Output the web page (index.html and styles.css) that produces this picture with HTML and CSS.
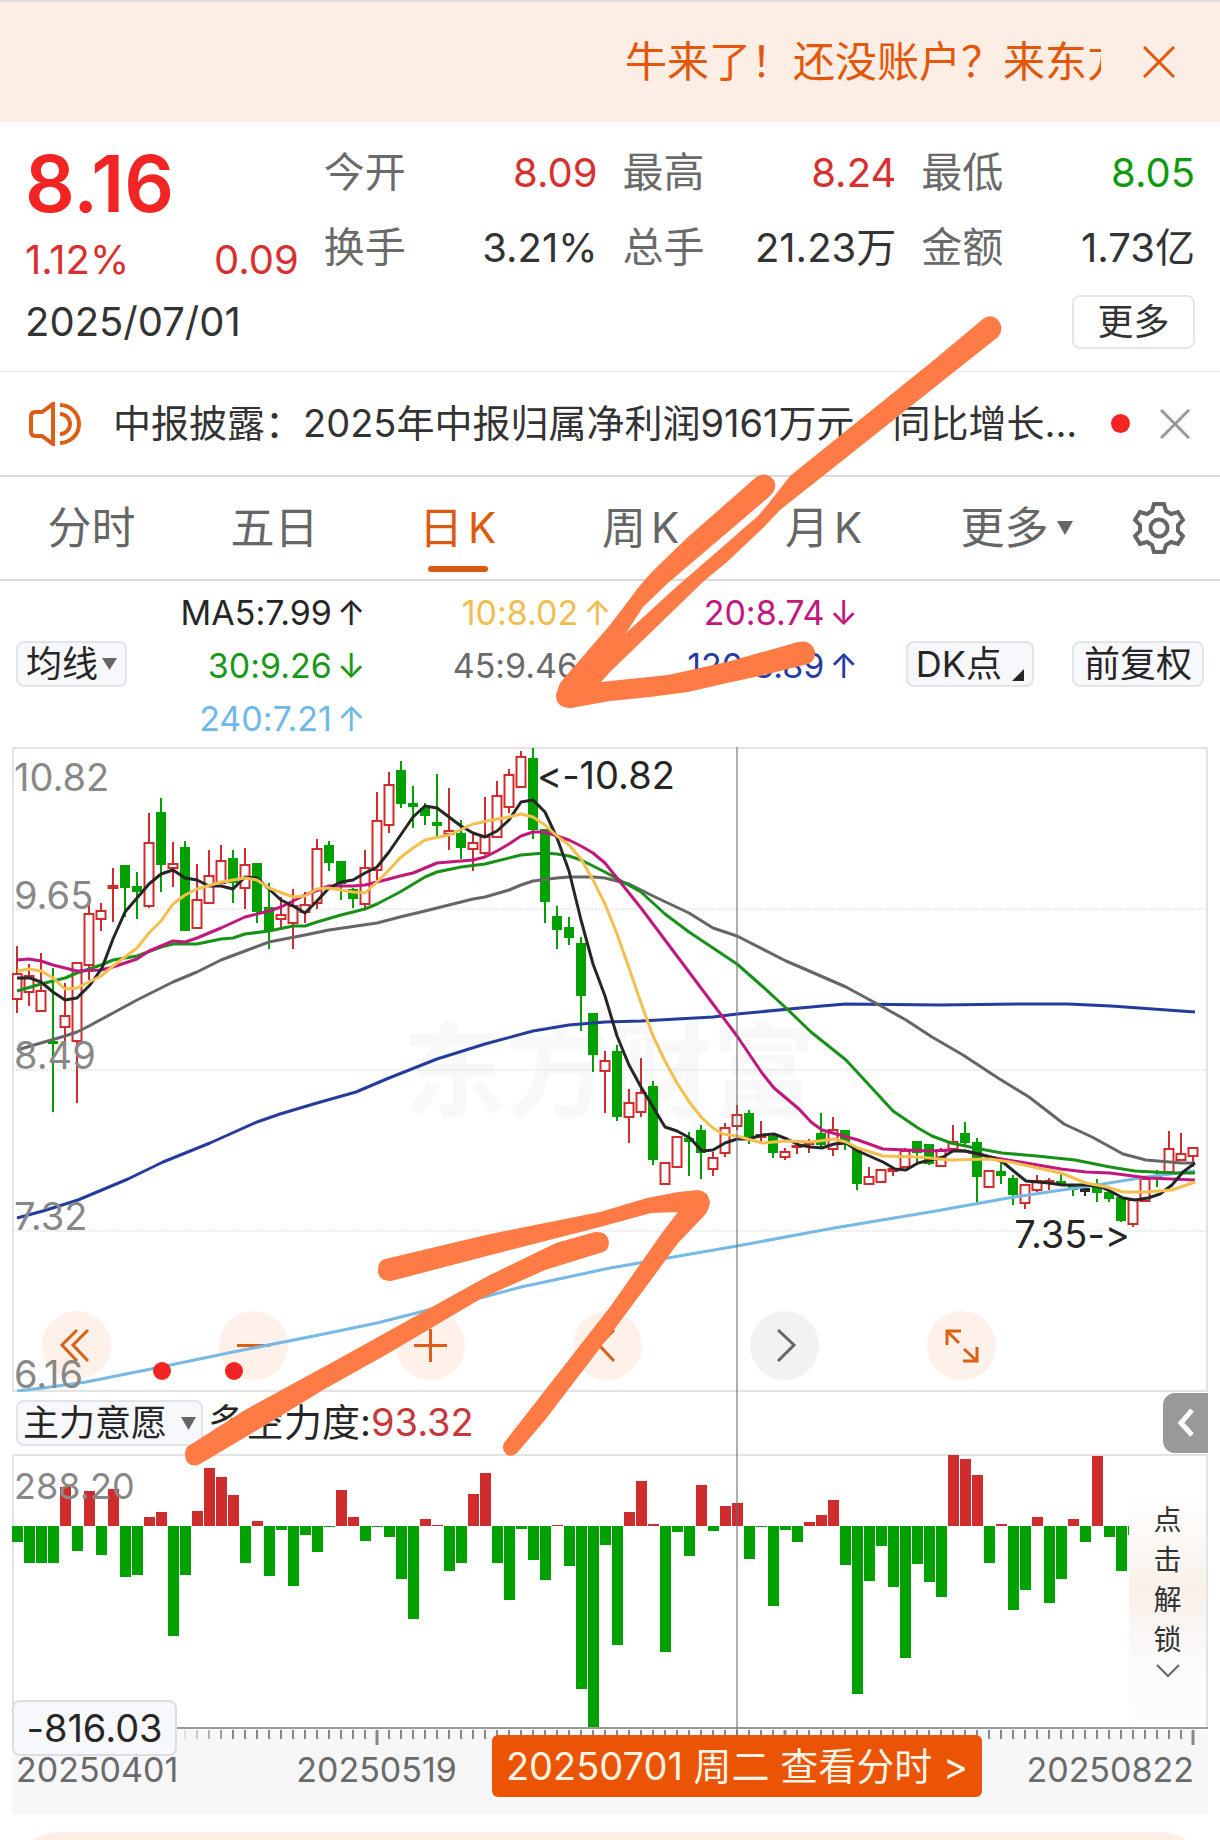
FILE: index.html
```html
<!DOCTYPE html>
<html lang="zh-CN">
<head>
<meta charset="utf-8">
<meta name="viewport" content="width=device-width, initial-scale=1">
<title>日K 行情</title>
<link rel="stylesheet" href="styles.css">
</head>
<body>
<div class="page">
  <aside class="promo">
    <a class="promo-text" href="#">牛来了！还没账户？来东方</a>
    <button class="icon-btn promo-close" aria-label="关闭广告">
      <svg width="32" height="32" viewBox="0 0 32 32"><path d="M1 1 31 31M31 1 1 31"/></svg>
    </button>
  </aside>

  <section class="quote">
    <div class="quote-main">
      <strong class="price">8.16</strong>
      <div class="change"><span>1.12%</span><span>0.09</span></div>
    </div>
    <dl class="stats">
      <div><dt>今开</dt><dd class="up">8.09</dd></div>
      <div><dt>最高</dt><dd class="up">8.24</dd></div>
      <div><dt>最低</dt><dd class="down">8.05</dd></div>
      <div><dt>换手</dt><dd>3.21%</dd></div>
      <div><dt>总手</dt><dd>21.23万</dd></div>
      <div><dt>金额</dt><dd>1.73亿</dd></div>
    </dl>
    <div class="quote-foot">
      <time datetime="2025-07-01">2025/07/01</time>
      <button class="more">更多</button>
    </div>
  </section>

  <section class="news">
    <svg class="speaker" width="52" height="44" viewBox="0 0 52 44"><path d="M2 15Q2 10 6 10H13L24 2V42L13 34H6Q2 34 2 29ZM31 3A19 19 0 0 1 31 41M31 12A10 10 0 0 1 31 32"/></svg>
    <a class="news-text" href="#">中报披露：2025年中报归属净利润9161万元，同比增长...</a>
    <i class="dot"></i>
    <button class="icon-btn news-close" aria-label="关闭公告">
      <svg width="30" height="30" viewBox="0 0 30 30"><path d="M1 1 29 29M29 1 1 29"/></svg>
    </button>
  </section>

  <nav class="tabs">
    <a href="#">分时</a>
    <a href="#">五日</a>
    <a href="#" class="active" aria-current="page">日<span class="k">K</span></a>
    <a href="#">周<span class="k">K</span></a>
    <a href="#">月<span class="k">K</span></a>
    <a href="#" class="tab-more">更多<svg width="16" height="14" viewBox="0 0 16 14"><path d="M0 0H16L8 14Z"/></svg></a>
    <button class="icon-btn gear" aria-label="设置">
      <svg width="52" height="52" viewBox="-26 -26 52 52"><path d="M-5-24H5L7-17 12-14 19-16 24-8 19-3V3L24 8 19 16 12 14 7 17 5 24H-5L-7 17-12 14-19 16-24 8-19 3V-3L-24-8-19-16-12-14-7-17Z"/><circle r="8.5"/></svg>
    </button>
  </nav>

  <section class="legend">
    <button class="chip">均线<svg width="15" height="12" viewBox="0 0 15 12"><path d="M0 0H15L7.500 12Z"/></svg></button>
    <ul class="ma">
      <li class="c5">MA5:7.99<b>↑</b></li>
      <li class="c10">10:8.02<b>↑</b></li>
      <li class="c20">20:8.74<b>↓</b></li>
      <li class="c30">30:9.26<b>↓</b></li>
      <li class="c45">45:9.46<b>↑</b></li>
      <li class="c120">120:8.89<b>↑</b></li>
      <li class="c240">240:7.21<b>↑</b></li>
    </ul>
    <button class="chip dk">DK点<svg width="12" height="12" viewBox="0 0 12 12"><path d="M12 0V12H0Z"/></svg></button>
    <button class="chip adjust">前复权</button>
  </section>

  <section class="chart">
    <div class="plot-wrap">
      <div class="controls">
        <button aria-label="最左"><svg viewBox="0 0 69 69"><path d="M46 19 31 34 46 50M35 19 20 34 35 50"/></svg></button>
        <button aria-label="缩小"><svg viewBox="0 0 69 69"><path d="M18 34.500H51"/></svg></button>
        <button aria-label="放大"><svg viewBox="0 0 69 69"><path d="M18 34.500H51M34.500 18V51"/></svg></button>
        <button aria-label="上一日"><svg viewBox="0 0 69 69"><path d="M41 19 26 34 41 50"/></svg></button>
        <button aria-label="下一日" class="grey"><svg viewBox="0 0 69 69"><path d="M28 19 44 34 28 50"/></svg></button>
        <button aria-label="全屏"><svg viewBox="0 0 69 69"><path d="M34 20H20V34M20 20 32 32M37 38 50 50M36 50H50V36"/></svg></button>
      </div>
      <svg class="plot kline" viewBox="12 -1 1196 645">
        <text class="watermark" x="403" y="361">东方财富</text>
        <rect class="frame" x="13" y="0" width="1194" height="643"/>
        <path class="grid" d="M13 161H1207M13 322H1207M13 483H1207"/>
        <g id="candles"></g>
        <g id="lines"></g>
        <g class="axis">
          <text x="14" y="43">10.82</text>
          <text x="14" y="161">9.65</text>
          <text x="14" y="321">8.49</text>
          <text x="14" y="482">7.32</text>
          <text x="14" y="640">6.16</text>
        </g>
        <text class="mark" x="537" y="41">&lt;-10.82</text>
        <text class="mark" x="1130" y="500" text-anchor="end">7.35-&gt;</text>
      </svg>
    </div>

    <div class="indicator">
      <button class="chip">主力意愿<svg width="15" height="13" viewBox="0 0 15 13"><path d="M0 0H15L7.500 13Z"/></svg></button>
      <p>多空力度:<span>93.32</span></p>
      <button class="drawer" aria-label="展开"><svg width="18" height="32" viewBox="0 0 18 32"><path d="M15 3 4 16 15 28"/></svg></button>
    </div>

    <div class="plot-wrap">
      <svg class="plot" viewBox="12 -1 1196 275">
        <path class="frame" d="M13 273V0H1207V273"/>
        <g id="bars"></g>
        <g class="axis small"><text x="14" y="44">288.20</text></g>
        <path class="base" d="M12 273H1208"/>
      </svg>
      <button class="unlock"><span>点</span><span>击</span><span>解</span><span>锁</span><svg width="24" height="14" viewBox="0 0 24 14"><path d="M1 1 12 12 23 1"/></svg></button>
      <output class="low">-816.03</output>
    </div>

    <div class="timeline">
      <svg class="plot" viewBox="12 0 1196 18"><g id="ticks"></g></svg>
      <div class="dates"><time>20250401</time><time>20250519</time><time>20250822</time></div>
      <button class="day">20250701 周二 查看分时 &gt;</button>
    </div>
    <i class="crosshair"></i>
  </section>

  <div class="next-card"></div>

  <svg class="drawing" viewBox="0 0 1220 1840" aria-hidden="true">
    <path d="M983 319Q991 313 998 320 1005 328 998 337L969 360 823 476 780 510 764 527 727 562 705 580 610 672 601 682 668 675 727 662 798 642Q811 639 815 651 816 660 808 664L768 674 727 683 688 692 650 697 610 701 571 708Q555 708 556 694L560 683 610 625 629 600Q643 580 661 563L688 537 754 479Q764 470 773 479 779 487 770 496L715 543 668 583 643 607 626 633 674 589 727 543 744 528 758 516 769 503 790 476 934 360Z"/>
    <path d="M385 1259 486 1235 545 1223 600 1212 647 1198 678 1192 698 1190Q708 1191 710 1202 709 1211 703 1217L678 1243 651 1280 610 1335 545 1420 517 1453Q511 1458 506 1454 501 1449 504 1443L610 1307 629 1280 662 1233 678 1212 651 1213 600 1227 479 1258 391 1281Q378 1281 378 1270 378 1261 385 1259Z"/>
    <path d="M595 1232Q608 1231 609 1243 608 1251 603 1252L545 1270 482 1298 389 1353 323 1390 274 1420 200 1464Q193 1468 187 1462 183 1454 187 1447L245 1410 342 1357 432 1307 486 1277 556 1243Z"/>
    <g class="pins"><circle cx="162" cy="1371" r="9"/><circle cx="234" cy="1371" r="9"/></g>
  </svg>
</div>
<script src="chart.js"></script>
</body>
</html>
```

FILE: styles.css
```css
* { box-sizing: border-box; }

body {
  margin: 0;
  background: #fff;
  color: #333;
  font: 40px/1.2 Inter, "Noto Sans CJK SC", sans-serif;
  font-variant-ligatures: no-contextual;
}

button { font: inherit; color: inherit; margin: 0; padding: 0; border: 0; background: none; cursor: pointer; }
a { color: inherit; text-decoration: none; }
svg { display: block; fill: none; }
ul, dl, dd, p { margin: 0; padding: 0; list-style: none; }

.page { position: relative; overflow: hidden; }

.promo {
  display: flex;
  align-items: center;
  justify-content: flex-end;
  gap: 42px;
  height: 122px;
  padding-right: 45px;
  border-top: 2px solid #dcdcdc;
  background: #fceee5;
  color: #e4570a;
}
.promo-text { width: 476px; overflow: hidden; white-space: nowrap; font-size: 42px; line-height: 60px; }
.icon-btn { display: flex; align-items: center; justify-content: center; stroke: currentColor; stroke-width: 3; }

.quote {
  display: grid;
  grid-template-columns: calc((100% - 75px) / 4) 1fr;
  column-gap: 25px;
  padding: 13px 25px 18px;
  border-bottom: 1px solid #ebebeb;
}
.price { display: block; padding-top: 4px; font-size: 78px; font-weight: 600; line-height: 90px; color: #f22424; }
.change { display: flex; justify-content: space-between; line-height: 62px; color: #d73030; }
.stats { display: grid; grid-template-columns: repeat(3, 1fr); column-gap: 25px; grid-auto-rows: 75px; line-height: 75px; }
.stats div { display: flex; justify-content: space-between; white-space: nowrap; }
.stats dt { color: #6a6a6a; font-size: 41px; }
.up { color: #d73030; }
.down { color: #0f9a0f; }
.quote-foot { grid-column: 1 / -1; display: flex; align-items: center; justify-content: space-between; height: 62px; }
.more { width: 123px; height: 54px; border: 2px solid #e6e6e8; border-radius: 8px; font-size: 36px; line-height: 48px; }

.news { display: flex; align-items: center; height: 105px; padding: 0 30px 0 29px; border-bottom: 2px solid #d9d9d9; }
.speaker { stroke: #dc5f15; stroke-width: 4; flex: none; }
.news-text { flex: 1; margin-left: 32px; font-size: 38px; white-space: nowrap; }
.dot { width: 19px; height: 19px; border-radius: 50%; background: #f22424; }
.news-close { margin-left: 30px; color: #999; }

.tabs { display: grid; grid-template-columns: repeat(6, 3fr) 2fr; height: 104px; border-bottom: 2px solid #d9d9d9; color: #666; font-size: 44px; }
.tabs a { position: relative; display: flex; align-items: center; justify-content: center; }
.tabs .k { margin-left: 5px; font-size: 42px; }
.tabs .active { color: #dc5a10; }
.active::after { content: ""; position: absolute; bottom: 7px; width: 60px; height: 6px; border-radius: 3px; background: #dc5a10; }
.tabs .tab-more { gap: 8px; padding-left: 20px; }
.tab-more svg { fill: #666; }
.gear svg { stroke: #666; stroke-width: 4; }

.legend { display: flex; align-items: center; height: 166px; padding: 0 16px; font-size: 34px; }
.chip {
  display: flex;
  align-items: center;
  justify-content: center;
  gap: 4px;
  height: 46px;
  padding: 0 8px;
  border: 2px solid #e3e4e8;
  border-radius: 8px;
  background: #f7f8fb;
  color: #262626;
  font-size: 36px;
  line-height: 42px;
  white-space: nowrap;
}
.chip svg { fill: #666; }
.adjust { padding: 0 10px; }
.ma { flex: 1; display: grid; grid-template-columns: 238fr 246fr 246fr; grid-auto-rows: 53px; line-height: 55px; }
.ma li { display: flex; justify-content: flex-end; gap: 5px; }
.ma b { font-weight: 400; }
.c5 { color: #262626; stroke: #262626; }
.c10 { color: #f0bd4e; stroke: #f4bf4e; }
.c20 { color: #c2177f; stroke: #c2177f; }
.c30 { color: #189a18; stroke: #189118; }
.c45 { color: #6a6a6a; stroke: #666; }
.c120 { color: #253ca4; stroke: #253c9c; }
.c240 { color: #6fb9ea; stroke: #76b9e6; }
.ma li { stroke: none; }
.dk { margin: 0 38px 0 48px; }
.dk svg { align-self: flex-end; margin: 0 0 4px 6px; fill: #262626; }

.chart { position: relative; margin: 0 12px; }
.plot-wrap { position: relative; }
.plot { width: 100%; height: auto; }
.kline { position: relative; z-index: 1; pointer-events: none; }
.frame { stroke: #e3e3e3; stroke-width: 2; }
.grid { stroke: #dcdcdc; stroke-width: 1; stroke-dasharray: 2 1; }
.base { stroke: #999; stroke-width: 2; }
.watermark { fill: #f8f8f8; font-size: 103px; font-weight: 700; }
.axis { fill: #888; font-size: 38px; }
.small { font-size: 36px; }
.mark { fill: #262626; font-size: 38px; }
#lines { stroke-width: 3; stroke-linejoin: round; }
#candles { stroke-width: 2; }
.rise { stroke: #cf2d2d; }
.fall { stroke: #00a100; fill: #00a100; }
.flat { stroke: #262626; fill: #262626; }
#bars .rise { fill: #cf2d2d; stroke: none; }
#bars .fall { stroke: none; }
#ticks { stroke: #888; stroke-width: 2; }

.controls { position: absolute; left: 30px; bottom: 12px; display: flex; gap: 108px; }
.controls button { width: 69px; height: 69px; border-radius: 50%; background: #fef1ea; stroke: #dc5f15; stroke-width: 3; }
.controls .grey { background: #f2f2f2; stroke: #666; }

.indicator { position: relative; display: flex; align-items: center; gap: 5px; height: 62px; padding-left: 4px; font-size: 38px; }
.indicator .chip { gap: 14px; padding: 0 5px; }
.indicator p { color: #262626; }
.indicator p span { color: #c8373a; }
.drawer {
  display: flex;
  align-items: center;
  justify-content: center;
  width: 45px;
  height: 60px;
  margin-left: auto;
  border-radius: 12px 0 0 12px;
  background: #999;
  stroke: #fff;
  stroke-width: 5;
}

.unlock {
  position: absolute;
  top: 2px;
  right: 2px;
  bottom: 2px;
  width: 77px;
  display: flex;
  flex-direction: column;
  align-items: center;
  padding-top: 44px;
  background: linear-gradient(#fff 15%, #f8f0ea 50%, #fbfbfb 75%, #fdfdfd);
  font-size: 28px;
  line-height: 40px;
  stroke: #666;
  stroke-width: 2;
}
.unlock span { stroke: none; }
.unlock svg { margin-top: 4px; }
.low {
  position: absolute;
  left: 0;
  bottom: -27px;
  z-index: 1;
  width: 165px;
  height: 56px;
  border: 2px solid #dcdde0;
  border-radius: 8px;
  background: #f7f8fb;
  color: #262626;
  font-size: 38px;
  line-height: 52px;
  text-align: center;
}

.timeline { position: relative; height: 85px; background: #f7f7fa; }
.dates { display: flex; padding: 0 14px 0 4px; color: #6a6a6a; font-size: 34px; line-height: 46px; }
.dates time + time { margin-left: 118px; }
.dates time:last-child { margin-left: auto; }
.day {
  position: absolute;
  top: 6px;
  left: 60.62%;
  z-index: 3;
  transform: translateX(-50%);
  width: 490px;
  height: 62px;
  border-radius: 6px;
  background: #ea5404;
  color: #fff3e6;
  font-size: 38px;
  line-height: 62px;
  white-space: nowrap;
}
.crosshair { position: absolute; top: 0; bottom: 79px; left: 60.5%; z-index: 2; width: 2px; background: rgb(110 110 110 / .55); }

.next-card { height: 120px; margin: 18px 12px -112px; border-radius: 48px; background: #fceee5; }

.drawing { position: absolute; top: 0; left: 0; width: 100%; height: auto; fill: #ff7b45; pointer-events: none; z-index: 4; }
.pins { fill: #f22424; }
```

FILE: chart.js
```js
const NS = "http://www.w3.org/2000/svg";
const STEP = 12;
const FIRST = 17.3;

function add(parent, tag, attrs) {
  const el = document.createElementNS(NS, tag);
  for (const key in attrs) el.setAttribute(key, attrs[key]);
  document.getElementById(parent).appendChild(el);
}

// Each candle: kind (r rise, g fall, k flat), high, body top, body bottom, low, in thirds of a unit.
const spring = "r617,703,778,818 r672,708,757,797 r638,753,812,812 g684,905,908,1117 r730,828,861,905 r668,670,903,1088 r490,521,675,720 r488,512,538,574 r385,438,445,545 g376,377,440,530 g397,440,453,537 r219,310,497,503 g173,219,371,455 r306,372,384,440 g302,323,570,572 r373,480,565,567 r331,409,489,491 r315,363,430,432 g331,357,425,488 r323,376,443,508 g372,373,512,550 g430,503,568,628 r470,525,537,562 r448,497,550,628 r455,495,516,550 r298,326,490,508 g302,319,366,392 g364,365,430,480 g445,449,474,503 r331,383,493,510 r157,243,390,420 r95,135,256,280 g62,92,188,205 g137,191,199,263 g190,206,226,255 g102,248,255,287 r145,273,282,330 g240,282,321,357 r280,310,326,392 r171,290,340,345 r124,168,290,292 r88,106,200,218 r34,52,142,144 g24,58,267,296 g268,270,482,549 g497,531,566,628 g530,564,590,615 g592,612,765,872 g820,821,942,997";
const summer = "r212,243,273,398 g195,216,409,422 r327,368,411,489 r233,338,395,410 g303,320,538,554 r546,550,611,616 r468,471,560,562 g457,478,484,588 g436,452,515,597 r515,535,566,588 r430,443,520,530 r374,404,437,450 g390,402,468,493 r423,465,472,488 g465,472,516,533 r503,517,532,540 r480,498,502,521 r478,487,491,518 g399,461,492,505 r410,450,508,529 g450,452,490,510 g500,510,608,629 r560,592,611,613 r566,570,607,609 r565,567,573,588 r505,512,560,562 g485,487,515,548 g492,494,550,555 r503,512,557,558 r436,485,507,510 g427,461,487,500 g473,489,587,665 r570,574,620,622 g550,577,584,612 g585,598,641,675 r612,616,668,686 r586,602,631,635 r593,603,608,631 g577,605,612,618 g612,622,628,647 k614,628,632,647 g597,624,637,667 g628,640,653,667 g652,655,720,725 r655,660,731,741 r587,598,664,667 g570,588,592,620 r452,506,575,577 r460,521,541,543 r503,505,527,562";
const kinds = { r: "rise", g: "fall", k: "flat" };

function drawCandles(list, start, top) {
  list.split(" ").forEach((item, n) => {
    const [high, open, close, low] = item.slice(1).split(",").map(v => Math.round(top + v / 3));
    const x = Math.round(FIRST + (start + n) * STEP);
    const half = item[0] === "r" ? 4.5 : 4;
    const d = `M${x} ${high}V${open}M${x} ${close}V${low}M${x - half} ${open}H${x + half}V${close}H${x - half}Z`;
    add("candles", "path", { class: kinds[item[0]], d });
  });
}
drawCandles(spring, 0, -8);
drawCandles(summer, 49, 232);

const averages = {
  c240: "17,643 43,640 86,634 156,620 233,604 319,587 377,575 428,562 484,549 521,539 568,529 610,520 737,498 834,480 930,464 1014,449 1103,436 1146,429 1195,423",
  c120: "17,470 43,463 78,452 128,431 163,414 210,395 257,374 280,366 317,355 356,344 389,330 437,311 485,296 533,283 569,277 605,274 641,273 713,269 737,266 800,260 822,258 846,256 940,257 1021,256 1068,256 1111,258 1195,264",
  c45: "17,302 41,295 65,288 77,284 89,278 113,265 137,252 161,240 173,234 197,224 221,212 245,203 269,194 305,187 329,182 377,175 400,169 425,163 449,157 473,151 485,149 509,142 521,137 533,133 557,130 569,129 593,129 605,130 629,136 653,148 689,165 713,180 737,188 786,213 800,219 846,239 881,258 906,272 932,289 963,307 998,330 1029,349 1064,376 1092,389 1123,406 1146,412 1182,415 1195,415",
  c30: "17,243 41,236 65,230 77,225 101,217 113,212 137,208 161,199 173,196 197,196 221,191 233,190 245,186 269,183 293,178 305,178 317,174 341,167 365,161 377,156 400,144 425,129 437,124 461,119 485,116 497,113 521,107 545,105 557,106 569,108 581,112 605,124 641,144 665,166 689,184 713,200 737,216 762,238 786,260 811,284 846,312 870,338 893,363 918,380 932,388 951,395 975,400 1002,405 1037,408 1075,412 1110,419 1135,423 1172,425 1195,425",
  c20: "17,212 29,211 41,213 53,217 77,223 101,222 113,219 137,211 149,203 173,193 185,194 197,190 221,180 245,169 269,163 281,159 305,147 329,138 353,138 365,137 389,131 400,128 413,125 425,120 437,115 449,114 473,112 485,109 497,103 509,96 521,88 533,84 545,84 557,88 569,92 581,98 593,105 605,115 617,130 641,160 665,192 689,224 713,256 737,288 762,325 774,340 799,361 811,374 822,382 858,392 883,401 930,403 951,402 965,403 990,409 1026,415 1061,421 1086,424 1110,425 1148,430 1195,432",
  c5: "17,230 30,230 41,234 53,244 65,252 77,250 90,237 102,220 113,191 125,164 137,150 149,136 161,126 173,122 185,130 197,132 209,138 221,138 233,141 245,129 257,130 269,141 281,152 293,158 305,165 317,153 329,140 341,134 353,132 365,125 377,119 389,104 400,88 413,69 425,58 437,60 449,69 461,78 473,85 485,89 497,83 509,72 521,54 533,52 545,64 557,90 569,123 581,172 593,216 605,248 617,288 629,317 641,339 653,359 665,379 677,383 690,390 702,403 713,402 725,395 737,391 749,391 762,387 774,386 787,391 799,397 811,399 822,400 834,396 846,395 858,403 883,414 895,421 906,422 918,415 943,409 953,403 965,403 979,406 994,410 1004,415 1016,425 1026,433 1049,435 1062,437 1086,437 1101,439 1112,444 1123,450 1135,452 1148,450 1160,446 1172,437 1183,424 1195,415",
  c10: "17,223 29,221 41,223 53,230 65,241 77,240 101,228 113,218 137,200 149,185 161,173 173,156 185,147 197,141 221,134 245,130 257,132 269,140 293,149 305,148 317,141 329,140 353,144 365,145 377,134 389,122 400,110 413,100 425,92 449,87 473,76 497,71 509,69 521,66 533,69 545,77 557,88 569,97 581,111 593,132 605,156 617,186 629,220 641,255 653,288 665,313 677,335 690,355 702,370 713,380 723,386 737,388 762,395 787,393 811,394 834,391 846,394 858,400 883,408 918,409 951,412 990,411 1010,414 1033,419 1061,425 1086,435 1107,439 1123,444 1146,444 1172,442 1195,434"
};
for (const name in averages) add("lines", "polyline", { class: name, points: averages[name] });

const force = [-16, -37, -37, -37, 39, -25, 35, -29, 37, -51, -49, 9, 14, -110, -49, 15, 58, 49, 31, -37, 5, -50, -4, -60, -9, -26, -1, 36, 9, -15, -1, -11, -53, -93, 7, 1, -45, -37, 32, 53, -37, -74, -3, -34, -54, 1, -40, -163, -201, -19, -119, 14, 45, 2, -126, -6, -30, 41, -5, 20, 23, -33, -1, -80, -4, -16, 4, 11, 26, -39, -168, -55, -20, -61, -132, -38, -56, -71, 71, 67, 51, -37, 2, -84, -64, 9, -77, -53, 7, -16, 70, -11, -45, -9];
force.forEach((value, i) => {
  add("bars", "rect", {
    class: value > 0 ? "rise" : "fall",
    x: Math.round(FIRST + i * STEP) - 5,
    y: value > 0 ? 71 - value : 71,
    width: 11,
    height: Math.abs(value)
  });
});

for (let i = 14; i < 99; i++) {
  const major = i === 30 || i === 64 || i === 98;
  add("ticks", "path", {
    d: `M${Math.round(FIRST + i * STEP)} 1v${major ? 15 : 9}`,
    "stroke-width": major ? 3 : 2,
    opacity: Math.min(1, (i - 13) / 5)
  });
}
```
